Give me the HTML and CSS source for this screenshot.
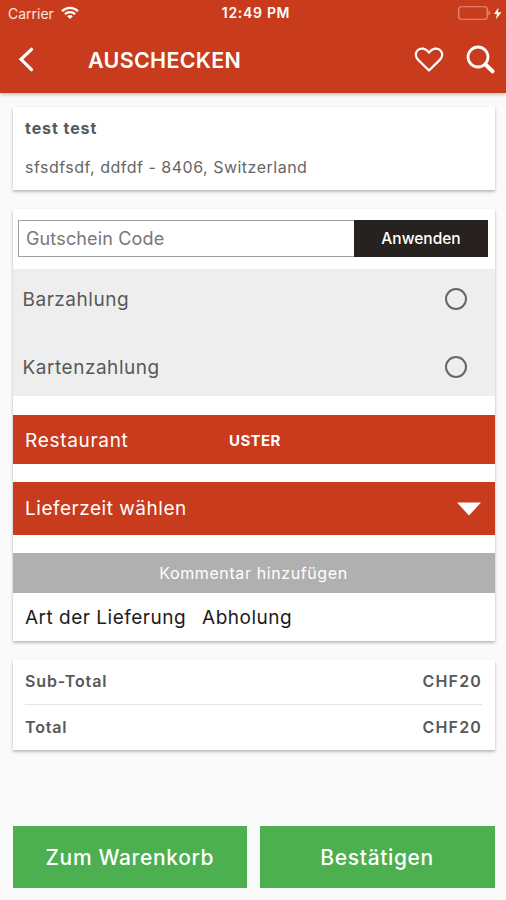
FILE: index.html
```
<!DOCTYPE html>
<html lang="de">
<head>
<meta charset="utf-8">
<title>Auschecken</title>
<link rel="stylesheet" href="styles.css">
</head>
<body>
<div class="screen">
  <header class="header">
    <div class="status">
      <div class="carrier">
        <span>Carrier</span>
        <svg class="wifi" width="18" height="14" viewBox="0 0 18 14" fill="none" stroke="#fff" stroke-width="2.300"><path d="M1 5.200C5.500.7 12.500.7 17 5.200"/><path d="M3.900 8.200c2.900-2.800 7.300-2.800 10.200 0"/><path d="M9 13L6.200 10.200c1.600-1.500 4-1.500 5.600 0z" fill="#fff" stroke="none"/></svg>
      </div>
      <div class="time">12:49 PM</div>
      <svg class="battery" width="44" height="15" viewBox="0 0 44 15"><rect x=".75" y=".75" width="28.500" height="12.500" rx="2.500" fill="none" stroke="#e39180" stroke-width="1.200"/><path d="M30.500 4.500c2 .8 2 4.200 0 5z" fill="#e39180"/><path d="M40.500 1.500L36 8h3l-1.200 5.200L43.500 6.300h-3.600z" fill="#fff"/></svg>
    </div>
    <div class="navbar">
      <svg class="back" width="16" height="26" viewBox="0 0 16 26" fill="none" stroke="#fff" stroke-width="3.200" stroke-linecap="round" stroke-linejoin="miter"><path d="M13.500 2.300L3 12.300 13.500 22.700"/></svg>
      <h1 class="title">AUSCHECKEN</h1>
      <svg class="heart" width="30" height="26" viewBox="0 0 30 26" fill="none" stroke="#fff" stroke-width="2.200" stroke-linejoin="round"><path d="M15 23.500L4.200 12.900C1 9.700 1.200 5.600 3.700 3.200c3-2.700 8.300-2.100 11.300 2.400 3-4.500 8.300-5.100 11.300-2.400 2.500 2.400 2.700 6.500-.5 9.700z"/></svg>
      <svg class="search" width="30" height="30" viewBox="0 0 30 30" fill="none" stroke="#fff"><circle cx="12" cy="12" r="10" stroke-width="2.800"/><path d="M19.500 19.500l7 6.800" stroke-width="4" stroke-linecap="round"/></svg>
    </div>
  </header>
  <main class="content">
    <section class="card address">
      <div class="name">test test</div>
      <div class="street">sfsdfsdf, ddfdf - 8406, Switzerland</div>
    </section>
    <section class="card order">
      <div class="voucher">
        <div class="voucher-input">Gutschein Code</div>
        <div class="voucher-apply">Anwenden</div>
      </div>
      <div class="payments">
        <div class="payment"><span>Barzahlung</span><i class="radio"></i></div>
        <div class="payment"><span>Kartenzahlung</span><i class="radio"></i></div>
      </div>
      <div class="bar restaurant"><span class="bar-label">Restaurant</span><b class="branch">USTER</b></div>
      <div class="bar delivery-time">
        <span>Lieferzeit wählen</span>
        <svg width="24" height="14" viewBox="0 0 24 14"><path d="M0 .5h24L12 13.500z" fill="#fff"/></svg>
      </div>
      <div class="comment">Kommentar hinzufügen</div>
      <div class="delivery-type"><span>Art der Lieferung</span><span>Abholung</span></div>
    </section>
    <section class="card totals">
      <div class="total-row"><span>Sub-Total</span><span class="amount">CHF20</span></div>
      <div class="total-row"><span>Total</span><span class="amount">CHF20</span></div>
    </section>
  </main>
  <footer class="actions">
    <div class="button">Zum Warenkorb</div>
    <div class="button">Bestätigen</div>
  </footer>
</div>
</body>
</html>
```
FILE: styles.css
```
* { box-sizing: border-box; }
body {
  margin: 0;
  background: #fafafa;
  font-family: Inter, "Liberation Sans", sans-serif;
  color: #58585a;
}
.screen {
  width: 506px;
  height: 900px;
  display: flex;
  flex-direction: column;
  overflow: hidden;
}
.header {
  height: 93px;
  flex: none;
  background: #c83b1d;
  color: #fff;
  box-shadow: 0 1px 4px rgba(0, 0, 0, .3);
}
.status {
  height: 27px;
  display: grid;
  grid-template-columns: 1fr auto 1fr;
  align-items: center;
  padding: 0 4px 0 8px;
  font-size: 14px;
}
.carrier { display: flex; align-items: center; gap: 7px; color: #fbe5df; }
.wifi { margin-top: -2px; }
.time { font-weight: 600; font-size: 14px; letter-spacing: .7px; margin-left: 2px; line-height: 26px; margin-top: -1px; }
.battery { justify-self: end; }
.navbar { height: 66px; display: flex; align-items: center; padding: 0 10px 0 18px; }
.title {
  margin: 0 auto 0 54px;
  font-size: 21.500px;
  line-height: 66px;
  font-weight: 600;
  letter-spacing: .3px;
}
.heart { margin-right: 22px; }
.content {
  flex: 1;
  padding: 14px 11.500px 0 12.500px;
}
.card {
  background: #fff;
  box-shadow: 0 2px 3px rgba(0, 0, 0, .22), 0 1px 2px rgba(0, 0, 0, .08);
}
.address { height: 83px; padding: 9px 12.500px 0; margin-bottom: 19px; }
.name { font-size: 16px; line-height: 24px; font-weight: 700; letter-spacing: .93px; }
.street { font-size: 16px; line-height: 24px; margin-top: 15px; letter-spacing: .5px; color: #666; }
.order { height: 432px; padding-top: 11px; margin-bottom: 19px; }
.voucher { display: flex; height: 37px; margin: 0 6.500px 12px 5.500px; }
.voucher-input {
  flex: 1;
  border: 1px solid #a0a0a0;
  border-right: 0;
  padding-left: 7px;
  font-size: 18px;
  line-height: 35px;
  letter-spacing: .15px;
  color: #777;
}
.voucher-apply {
  width: 134px;
  background: #272220;
  color: #fff;
  text-align: center;
  font-size: 15.500px;
  line-height: 37px;
  font-weight: 500;
}
.payments { background: #eee; height: 127px; padding: 0 28px 0 10px; margin-bottom: 19px; font-size: 19px; letter-spacing: .53px; }
.payment { display: flex; justify-content: space-between; align-items: center; height: 59px; }
.payment span { padding-top: 2px; }
.payment + .payment { margin-top: 9px; }
.radio { width: 22px; height: 22px; border: 2px solid #666; border-radius: 50%; }
.bar {
  display: flex;
  align-items: center;
  background: #c83b1d;
  color: #fff;
  font-size: 19px;
  letter-spacing: .52px;
  padding: 0 14px 0 12.500px;
}
.restaurant { height: 49px; margin-bottom: 18px; }
.bar-label { width: 204px; letter-spacing: .7px; padding-top: 2px; }
.branch { font-size: 15px; font-weight: 700; letter-spacing: .4px; padding-top: 1px; }
.delivery-time { height: 53px; margin-bottom: 18px; justify-content: space-between; }
.delivery-time svg { margin-top: 1px; }
.comment {
  height: 40px;
  background: #b0b0b0;
  color: #fff;
  text-align: center;
  font-size: 16px;
  line-height: 40px;
  letter-spacing: .6px;
}
.delivery-type { display: flex; gap: 16px; padding-left: 12.500px; font-size: 19px; line-height: 50px; letter-spacing: .5px; color: #1c1c1c; }
.totals { height: 90px; padding: 0 12.500px; font-size: 16px; font-weight: 600; letter-spacing: .85px; }
.total-row { display: flex; justify-content: space-between; height: 44px; line-height: 43px; }
.total-row + .total-row { border-top: 1px solid #e6e6e6; line-height: 45px; }
.amount { letter-spacing: 1.150px; }
.actions { display: flex; gap: 12.500px; padding: 0 11.500px 12px 12.500px; }
.button {
  flex: 1;
  height: 62px;
  background: #4caf50;
  color: #fff;
  text-align: center;
  font-size: 21px;
  line-height: 64px;
  font-weight: 500;
  letter-spacing: .65px;
}
```
